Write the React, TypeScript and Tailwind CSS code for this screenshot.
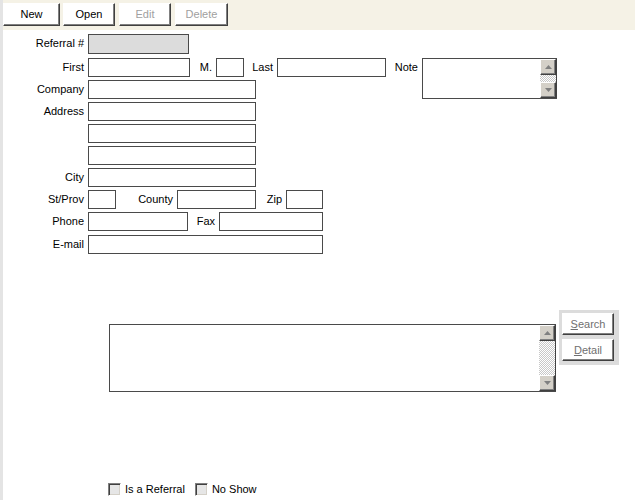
import { FC, ReactNode } from "react";

// classic raised button
const ToolButton: FC<{ label: ReactNode; width: string; disabled?: boolean; height?: string }> = ({ label, width, disabled, height = "h-[23px]" }) => (
    <div
        className={`${width} ${height} shrink-0 flex items-center justify-center bg-white border-t border-l border-t-white border-l-white border-r border-b border-r-[#404040] border-b-[#404040] shadow-[inset_-1px_-1px_0_#808080] ${disabled ? "text-[#a0a0a0]" : "text-black"}`}
    >
        {label}
    </div>
);

const Label: FC<{ w: string; children: ReactNode }> = ({ w, children }) => (
    <div className={`${w} shrink-0 text-right pr-[4px] leading-[19px] whitespace-nowrap`}>{children}</div>
);

const Field: FC<{ w: string; h?: string; gray?: boolean }> = ({ w, h = "h-[19px]", gray }) => (
    <div className={`${w} ${h} shrink-0 border border-[#4a4a4a] ${gray ? "bg-[#dcdcdc]" : "bg-white"}`} />
);

const Arrow: FC<{ down?: boolean }> = ({ down }) => (
    <div className="w-[16px] h-[16px] shrink-0 flex items-center justify-center bg-[#d4d0c8] border-t border-l border-t-white border-l-white border-r border-b border-r-[#404040] border-b-[#404040] shadow-[inset_-1px_-1px_0_#808080]">
        <svg width="7" height="4" viewBox="0 0 7 4">
            {down ? <polygon points="0,0 7,0 3.5,4" fill="#808080" /> : <polygon points="0,4 7,4 3.5,0" fill="#808080" />}
        </svg>
    </div>
);

const ScrollBox: FC<{ w: string; h: string }> = ({ w, h }) => (
    <div className={`${w} ${h} shrink-0 flex border-t border-l border-b border-[#4a4a4a] bg-white`}>
        <div className="flex-1" />
        <div className="w-[17px] flex flex-col border-r border-[#404040]">
            <Arrow />
            <div className="flex-1 bg-[repeating-conic-gradient(#c8c8c8_0_25%,#ffffff_0_50%)] bg-[length:2px_2px]" />
            <Arrow down />
        </div>
    </div>
);

const Check: FC<{ label: string }> = ({ label }) => (
    <div className="flex items-center">
        <div className="w-[13px] h-[13px] border-t border-l border-t-[#808080] border-l-[#808080] border-r border-b border-r-white border-b-white bg-[#e6e6e6] shadow-[inset_1px_1px_0_#404040,inset_-1px_-1px_0_#d4d0c8]" />
        <span className="ml-[4px] leading-[13px]">{label}</span>
    </div>
);

const App: FC = () => {
    return (
        <div
            className="w-[635px] h-[500px] flex bg-white text-[11px] text-black overflow-hidden"
            style={{ fontFamily: '"Liberation Sans", Arial, sans-serif' }}
        >
            <div className="w-[3px] shrink-0 bg-[#e4e4e4]" />
            <div className="flex-1 flex flex-col [&>*]:shrink-0">
                {/* toolbar */}
                <div className="h-[30px] bg-[#f5f2e6] flex items-start pt-[3px]">
                    <ToolButton label="New" width="w-[57px]" />
                    <div className="w-[3px]" />
                    <ToolButton label="Open" width="w-[52px]" />
                    <div className="w-[4px]" />
                    <ToolButton label="Edit" width="w-[52px]" disabled />
                    <div className="w-[4px]" />
                    <ToolButton label="Delete" width="w-[53px]" disabled />
                </div>

                {/* referral fields */}
                <div className="flex mt-[4px]">
                    <Label w="w-[85px]">Referral #</Label>
                    <Field w="w-[101px]" h="h-[20px]" gray />
                </div>

                <div className="flex items-start mt-[4px]">
                    <div className="flex flex-col gap-[3px]">
                        <div className="flex">
                            <Label w="w-[85px]">First</Label>
                            <Field w="w-[102px]" />
                            <Label w="w-[26px]">M.</Label>
                            <Field w="w-[28px]" />
                            <Label w="w-[33px]">Last</Label>
                            <Field w="w-[109px]" />
                        </div>
                        <div className="flex">
                            <Label w="w-[85px]">Company</Label>
                            <Field w="w-[168px]" />
                        </div>
                        <div className="flex">
                            <Label w="w-[85px]">Address</Label>
                            <Field w="w-[168px]" />
                        </div>
                        <div className="flex">
                            <Label w="w-[85px]"></Label>
                            <Field w="w-[168px]" />
                        </div>
                        <div className="flex">
                            <Label w="w-[85px]"></Label>
                            <Field w="w-[168px]" />
                        </div>
                        <div className="flex">
                            <Label w="w-[85px]">City</Label>
                            <Field w="w-[168px]" />
                        </div>
                        <div className="flex">
                            <Label w="w-[85px]">St/Prov</Label>
                            <Field w="w-[28px]" />
                            <Label w="w-[61px]">County</Label>
                            <Field w="w-[79px]" />
                            <Label w="w-[30px]">Zip</Label>
                            <Field w="w-[37px]" />
                        </div>
                        <div className="flex">
                            <Label w="w-[85px]">Phone</Label>
                            <Field w="w-[100px]" />
                            <Label w="w-[31px]">Fax</Label>
                            <Field w="w-[104px]" />
                        </div>
                        <div className="flex mt-[1px]">
                            <Label w="w-[85px]">E-mail</Label>
                            <Field w="w-[235px]" />
                        </div>
                    </div>
                    <div className="flex items-start">
                        <Label w="w-[36px]">Note</Label>
                        <ScrollBox w="w-[135px]" h="h-[41px]" />
                    </div>
                </div>

                {/* result list */}
                <div className="flex items-start mt-[56px] ml-[106px] gap-[3px]">
                    <div className="mt-[14px]">
                        <ScrollBox w="w-[447px]" h="h-[68px]" />
                    </div>
                    <div className="w-[60px] bg-[#dcdcdc] p-[3px] pb-[4px] flex flex-col gap-[4px]">
                        <ToolButton
                            label={<span className="text-[#707070]"><span className="underline">S</span>earch</span>}
                            width="w-[52px]"
                            height="h-[22px]"
                        />
                        <ToolButton
                            label={<span className="text-[#707070]"><span className="underline">D</span>etail</span>}
                            width="w-[52px]"
                            height="h-[22px]"
                        />
                    </div>
                </div>

                <div className="flex items-center mt-[91px] ml-[105px] gap-[10px]">
                    <Check label="Is a Referral" />
                    <Check label="No Show" />
                </div>
            </div>
        </div>
    );
};

export default App;
